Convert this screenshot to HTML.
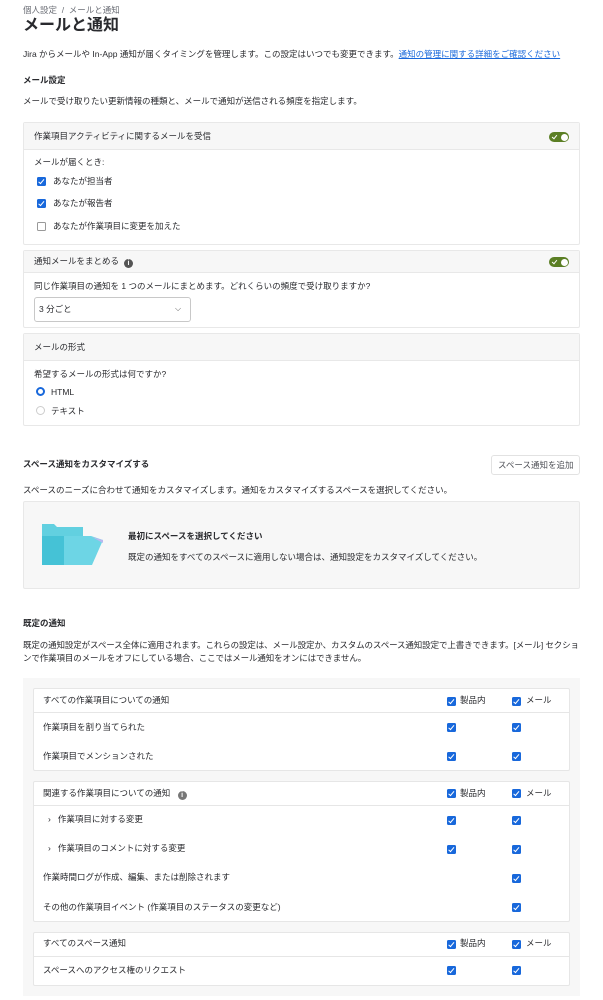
<!DOCTYPE html>
<html><head><meta charset="utf-8"><style>
*{margin:0;padding:0;box-sizing:border-box}
body{width:603px;height:1000px;background:#fff;font-family:"Liberation Sans","Noto Sans CJK JP",sans-serif;color:#292a2e;font-size:8.5px;position:relative;overflow:hidden}
.a{position:absolute;white-space:nowrap;line-height:12px}
.b{font-weight:bold}
.card{position:absolute;border:1px solid #e8e8e8;border-radius:2px;background:#fff}
.hd{position:absolute;left:0;right:0;top:0;background:#f7f7f7;border-bottom:1px solid #e8e8e8}
.tg{position:absolute;width:20px;height:10px;border-radius:5px;background:#5b7f24}
.tg:after{content:"";position:absolute;right:1.5px;top:1.5px;width:7px;height:7px;border-radius:50%;background:#fff}
.tg:before{content:"";position:absolute;left:4px;top:2px;width:2px;height:4px;border:solid #fff;border-width:0 1px 1px 0;transform:rotate(40deg)}
.cb{position:absolute;width:8.5px;height:8.5px;border-radius:1.5px;background:#1868db}
.cb:after{content:"";position:absolute;left:3px;top:1px;width:2px;height:4.5px;border:solid #fff;border-width:0 1.2px 1.2px 0;transform:rotate(40deg)}
.cu{position:absolute;width:8.5px;height:8.5px;border-radius:1.5px;border:1px solid #999;background:#fff}
.info{display:inline-block;width:9px;height:9px;border-radius:50%;background:#555;color:#fff;font-size:7px;line-height:9px;text-align:center;font-weight:bold;vertical-align:-1px;margin-left:5px}
.g{position:absolute;left:33px;width:537px;background:#fff;border:1px solid #e6e6e6;border-radius:2px}
.gh{border-bottom:1px solid #e6e6e6}
</style></head><body>
<div class="a" style="left:23px;top:4px;color:#6b6e76;font-size:8.5px">個人設定 &nbsp;/&nbsp; メールと通知</div>
<div class="a b" style="left:23px;top:16px;font-size:16px;line-height:19px">メールと通知</div>
<div class="a" style="left:23px;top:48px">Jira からメールや In-App 通知が届くタイミングを管理します。この設定はいつでも変更できます。<span style="color:#1868db;text-decoration:underline">通知の管理に関する詳細をご確認ください</span></div>
<div class="a b" style="left:23px;top:74px">メール設定</div>
<div class="a" style="left:23px;top:95px">メールで受け取りたい更新情報の種類と、メールで通知が送信される頻度を指定します。</div>

<div class="card" style="left:23px;top:122px;width:557px;height:123px">
<div class="hd" style="height:27px"></div>
<div class="a" style="left:10px;top:7px">作業項目アクティビティに関するメールを受信</div>
<div class="tg" style="left:525px;top:9px"></div>
<div class="a" style="left:10px;top:33px">メールが届くとき:</div>
<div class="cb" style="left:13px;top:54px"></div><div class="a" style="left:29px;top:52px">あなたが担当者</div>
<div class="cb" style="left:13px;top:76px"></div><div class="a" style="left:29px;top:74px">あなたが報告者</div>
<div class="cu" style="left:13px;top:99px"></div><div class="a" style="left:29px;top:97px">あなたが作業項目に変更を加えた</div>
</div>

<div class="card" style="left:23px;top:250px;width:557px;height:78px">
<div class="hd" style="height:22px"></div>
<div class="a" style="left:10px;top:4px">通知メールをまとめる<span class="info">i</span></div>
<div class="tg" style="left:525px;top:6px"></div>
<div class="a" style="left:10px;top:29px">同じ作業項目の通知を 1 つのメールにまとめます。どれくらいの頻度で受け取りますか?</div>
<div style="position:absolute;left:10px;top:46px;width:157px;height:25px;border:1px solid #c8c8c8;border-radius:3px"></div>
<div class="a" style="left:15px;top:52px">3 分ごと</div>
<div class="a" style="left:151px;top:52px;font-size:8px;color:#555">⌵</div>
</div>

<div class="card" style="left:23px;top:333px;width:557px;height:93px">
<div class="hd" style="height:27px"></div>
<div class="a" style="left:10px;top:7px">メールの形式</div>
<div class="a" style="left:10px;top:34px">希望するメールの形式は何ですか?</div>
<div style="position:absolute;left:12px;top:53px;width:9px;height:9px;border-radius:50%;border:2.5px solid #1868db;background:#fff"></div>
<div class="a" style="left:27px;top:52px">HTML</div>
<div style="position:absolute;left:12px;top:72px;width:9px;height:9px;border-radius:50%;border:1px solid #ccc"></div>
<div class="a" style="left:27px;top:71px">テキスト</div>
</div>

<div class="a b" style="left:23px;top:458px">スペース通知をカスタマイズする</div>
<div style="position:absolute;left:491px;top:455px;width:89px;height:20px;border:1px solid #e2e2e2;border-radius:3px"></div>
<div class="a" style="left:498px;top:459px;color:#505258">スペース通知を追加</div>
<div class="a" style="left:23px;top:484px">スペースのニーズに合わせて通知をカスタマイズします。通知をカスタマイズするスペースを選択してください。</div>

<div style="position:absolute;left:23px;top:501px;width:557px;height:88px;background:#f7f7f7;border:1px solid #e8e8e8;border-radius:2px"></div>
<svg style="position:absolute;left:42px;top:524px" width="62" height="42" viewBox="0 0 62 42">
<path d="M0 0h12l3 3h26v38H0z" fill="#62d0e0"/>
<path d="M0 12h22v29H0z" fill="#45c2d6"/>
<path d="M22 12h27l12 4-11 25H22z" fill="#6dd5e5"/>
<path d="M50 13l11 3v3l-2-1z" fill="#b8b8f0"/>
</svg>
<div class="a b" style="left:128px;top:530px">最初にスペースを選択してください</div>
<div class="a" style="left:128px;top:551px">既定の通知をすべてのスペースに適用しない場合は、通知設定をカスタマイズしてください。</div>

<div class="a b" style="left:23px;top:617px">既定の通知</div>
<div class="a" style="left:23px;top:639px;line-height:13px;letter-spacing:-0.12px">既定の通知設定がスペース全体に適用されます。これらの設定は、メール設定か、カスタムのスペース通知設定で上書きできます。[メール] セクショ<br>ンで作業項目のメールをオフにしている場合、ここではメール通知をオンにはできません。</div>

<div style="position:absolute;left:23px;top:678px;width:557px;height:318px;background:#f7f7f7"></div>

<div class="g" style="top:688px;height:83px"><div class="gh" style="height:24px"></div></div>
<div class="a" style="left:43px;top:694px">すべての作業項目についての通知</div>
<div class="cb" style="left:447px;top:697px"></div><div class="a" style="left:460px;top:694px">製品内</div>
<div class="cb" style="left:512px;top:697px"></div><div class="a" style="left:526px;top:694px">メール</div>
<div class="a" style="left:43px;top:721px">作業項目を割り当てられた</div>
<div class="cb" style="left:447px;top:723px"></div><div class="cb" style="left:512px;top:723px"></div>
<div class="a" style="left:43px;top:750px">作業項目でメンションされた</div>
<div class="cb" style="left:447px;top:752px"></div><div class="cb" style="left:512px;top:752px"></div>

<div class="g" style="top:781px;height:141px"><div class="gh" style="height:24px"></div></div>
<div class="a" style="left:43px;top:787px">関連する作業項目についての通知 <span class="info" style="background:#777">i</span></div>
<div class="cb" style="left:447px;top:789px"></div><div class="a" style="left:460px;top:787px">製品内</div>
<div class="cb" style="left:512px;top:789px"></div><div class="a" style="left:526px;top:787px">メール</div>
<div class="a" style="left:48px;top:813px">›&nbsp;&nbsp; 作業項目に対する変更</div>
<div class="cb" style="left:447px;top:816px"></div><div class="cb" style="left:512px;top:816px"></div>
<div class="a" style="left:48px;top:842px">›&nbsp;&nbsp; 作業項目のコメントに対する変更</div>
<div class="cb" style="left:447px;top:845px"></div><div class="cb" style="left:512px;top:845px"></div>
<div class="a" style="left:43px;top:871px">作業時間ログが作成、編集、または削除されます</div>
<div class="cb" style="left:512px;top:874px"></div>
<div class="a" style="left:43px;top:901px">その他の作業項目イベント (作業項目のステータスの変更など)</div>
<div class="cb" style="left:512px;top:903px"></div>

<div class="g" style="top:932px;height:54px"><div class="gh" style="height:24px"></div></div>
<div class="a" style="left:43px;top:937px">すべてのスペース通知</div>
<div class="cb" style="left:447px;top:940px"></div><div class="a" style="left:460px;top:937px">製品内</div>
<div class="cb" style="left:512px;top:940px"></div><div class="a" style="left:526px;top:937px">メール</div>
<div class="a" style="left:43px;top:964px">スペースへのアクセス権のリクエスト</div>
<div class="cb" style="left:447px;top:966px"></div><div class="cb" style="left:512px;top:966px"></div>
</body></html>
